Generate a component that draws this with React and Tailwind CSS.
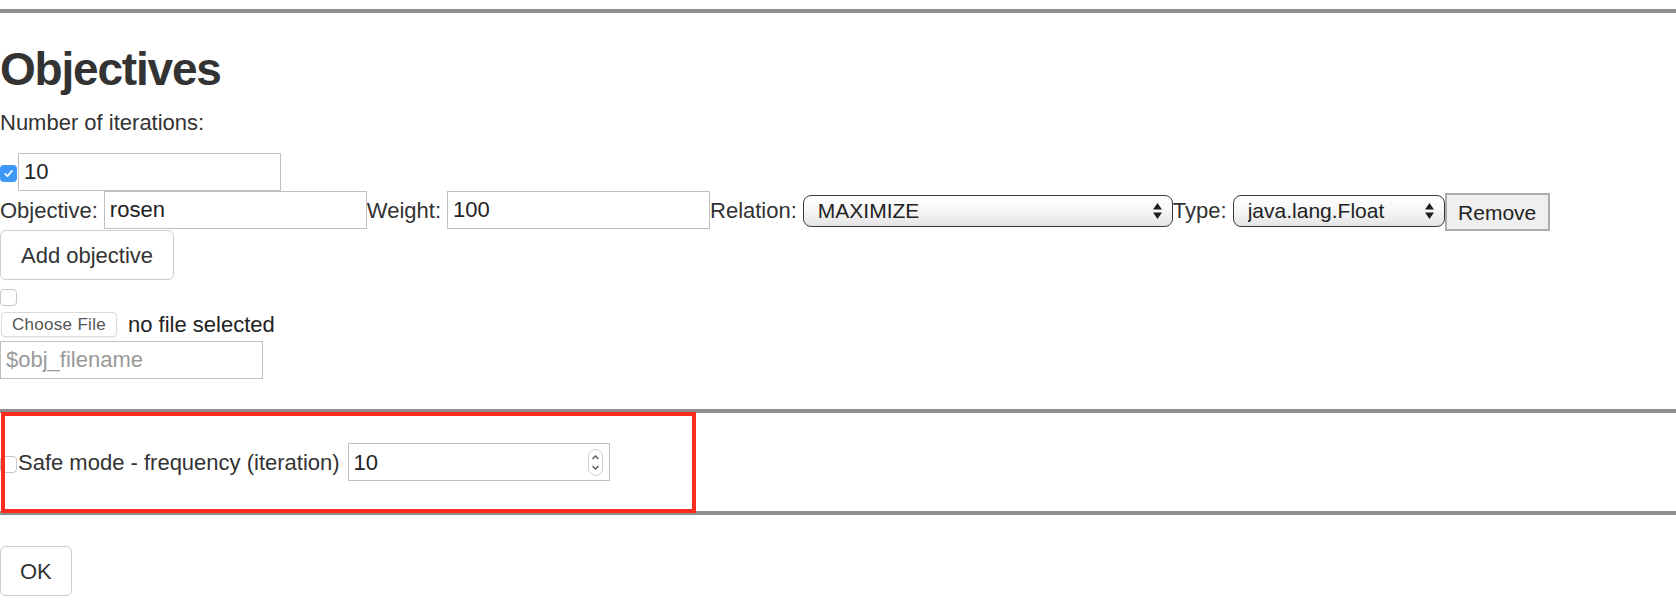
import { useState } from "react";

function Box({ checked }) {
  if (checked) {
    return (
      <span className="flex h-[17px] w-[17px] shrink-0 items-center justify-center rounded-[4px] bg-[#3d99f7]">
        <svg width="11" height="11" viewBox="0 0 11 11">
          <path
            d="M2.2 5.9 L4.5 8.2 L8.9 2.9"
            fill="none"
            stroke="#fff"
            strokeWidth="1.7"
            strokeLinecap="round"
            strokeLinejoin="round"
          />
        </svg>
      </span>
    );
  }
  return (
    <span className="block h-[17px] w-[17px] shrink-0 rounded-[4px] border border-[#c6c6c6] bg-white" />
  );
}

function MacSelect({ value, options, className }) {
  return (
    <div className={className}>
      <div className="relative h-[32px] w-full">
        <select
          defaultValue={value}
          className="h-full w-full appearance-none rounded-[8px] border-[1.5px] border-[#3a3a3a] bg-linear-to-b from-white via-[#f6f6f6] to-[#e4e4e4] pl-[14px] text-[21px] leading-[28px] text-[#222] outline-none"
        >
          {options.map((o) => (
            <option key={o}>{o}</option>
          ))}
        </select>
        <svg
          className="pointer-events-none absolute right-[10px] top-[7px]"
          width="11"
          height="18"
          viewBox="0 0 11 18"
        >
          <path d="M5.5 1 L10 7.5 L1 7.5 Z" fill="#1e1e1e" />
          <path d="M1 10.5 L10 10.5 L5.5 17 Z" fill="#1e1e1e" />
        </svg>
      </div>
    </div>
  );
}

const inputCls =
  "h-[38px] w-[263px] border border-[#c0c0c0] bg-white px-[5px] text-[22px] text-[#222] outline-none placeholder:text-[#9a9a9a]";

export default function App() {
  const [iterations, setIterations] = useState("10");
  const [objective, setObjective] = useState("rosen");
  const [weight, setWeight] = useState("100");
  const [freq, setFreq] = useState("10");

  return (
    <div className="min-h-screen bg-white pt-[9px] font-['Liberation_Sans',Arial,sans-serif] text-[22px] leading-[31px] text-[#333]">
      <div className="h-[4px] bg-[#8f8f8f]" />

      <h1 className="mt-[31px] text-[46px] font-bold leading-[50px] tracking-[-1.2px] text-[#333]">
        Objectives
      </h1>

      <div className="mt-[13px]">Number of iterations:</div>

      <div className="mt-[15px] flex items-center">
        <span className="mt-[3px]">
          <Box checked />
        </span>
        <input
          className={`ml-[1px] ${inputCls}`}
          value={iterations}
          onChange={(e) => setIterations(e.target.value)}
        />
      </div>

      <div className="flex items-center">
        <span>Objective:</span>
        <input
          className={`ml-[6px] ${inputCls}`}
          value={objective}
          onChange={(e) => setObjective(e.target.value)}
        />
        <span>Weight:</span>
        <input
          className={`ml-[6px] ${inputCls}`}
          value={weight}
          onChange={(e) => setWeight(e.target.value)}
        />
        <span>Relation:</span>
        <MacSelect
          className="ml-[6px] w-[370px] translate-y-[1px]"
          value="MAXIMIZE"
          options={["MAXIMIZE", "MINIMIZE"]}
        />
        <span>Type:</span>
        <MacSelect
          className="ml-[6px] w-[212px] translate-y-[1px]"
          value="java.lang.Float"
          options={["java.lang.Float", "java.lang.Integer"]}
        />
        <button
          type="button"
          className="h-[38px] w-[105px] translate-y-[2px] border-2 border-[#ababab] bg-[#efefef] text-[21px] text-[#222]"
        >
          Remove
        </button>
      </div>

      <button
        type="button"
        className="mt-[1px] block h-[50px] rounded-[6px] border border-[#cccccc] bg-white px-[20px] text-[22px] text-[#333]"
      >
        Add objective
      </button>

      <div className="mt-[9px]">
        <Box />
      </div>

      <div className="mt-[3px] flex items-center">
        <button
          type="button"
          className="ml-[1px] h-[25px] w-[116px] rounded-[4px] border border-[#dadada] bg-white text-[17px] leading-[23px] tracking-[0.3px] text-[#555] shadow-[0_1px_1px_rgba(0,0,0,0.06)]"
        >
          Choose File
        </button>
        <span className="ml-[11px] text-[#222]">no file selected</span>
      </div>

      <input className={`mt-[1px] block ${inputCls}`} placeholder="$obj_filename" />

      <div className="mt-[30px] h-[4px] bg-[#8f8f8f]" />

      <div className="relative py-[30px]">
        <div className="flex items-center">
          <span className="mt-[4px]">
            <Box />
          </span>
          <span className="ml-[1px]">Safe mode - frequency (iteration)</span>
          <div className="ml-[8px] flex h-[38px] w-[262px] items-center border border-[#c0c0c0] bg-white pl-[5px] pr-[6px]">
            <input
              className="min-w-0 flex-1 text-[22px] text-[#222] outline-none"
              value={freq}
              onChange={(e) => setFreq(e.target.value)}
            />
            <svg width="15" height="27" viewBox="0 0 15 27">
              <rect x="0.5" y="0.5" width="14" height="26" rx="7" fill="#fff" stroke="#cfcfcf" />
              <path d="M4.5 10 L7.5 7 L10.5 10" fill="none" stroke="#555" strokeWidth="1.3" />
              <path d="M4.5 17 L7.5 20 L10.5 17" fill="none" stroke="#555" strokeWidth="1.3" />
            </svg>
          </div>
        </div>
        <div className="pointer-events-none absolute left-[1px] top-[-1px] h-[101px] w-[695px] border-[4px] border-[#fb2b1f]" />
      </div>

      <div className="h-[4px] bg-[#8f8f8f]" />

      <button
        type="button"
        className="mt-[31px] block h-[50px] rounded-[6px] border border-[#cccccc] bg-white px-[19px] text-[22px] text-[#333]"
      >
        OK
      </button>
    </div>
  );
}
